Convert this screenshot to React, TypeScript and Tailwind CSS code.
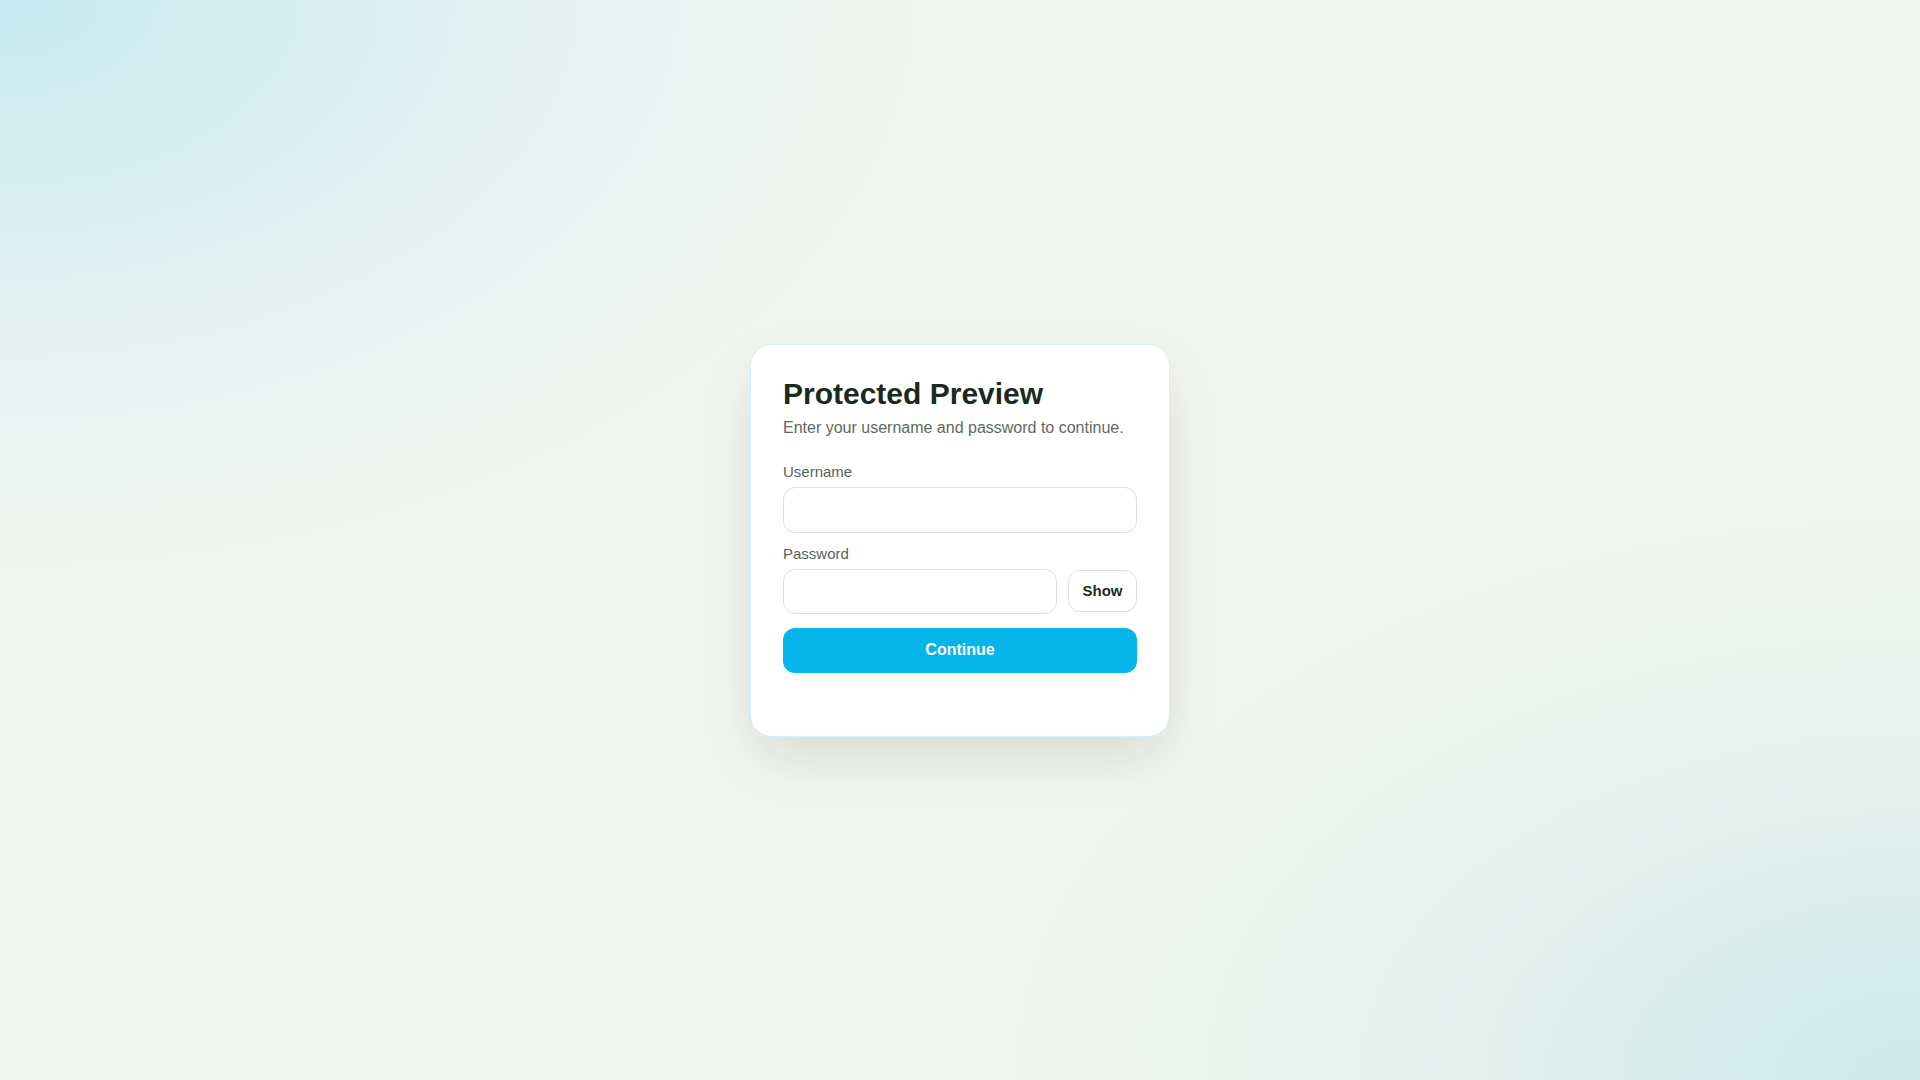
import { useState } from "react";

export default function App() {
  const [username, setUsername] = useState("");
  const [password, setPassword] = useState("");
  const [showPassword, setShowPassword] = useState(false);

  return (
    <div
      className="min-h-screen w-full flex items-center justify-center bg-[#f3f5f0] bg-[radial-gradient(ellipse_50%_55%_at_0%_0%,#c6eaf0_0%,rgba(214,238,240,0.65)_45%,rgba(243,245,240,0)_100%),radial-gradient(ellipse_50%_55%_at_100%_100%,#cde9ea_0%,rgba(218,237,235,0.65)_45%,rgba(243,245,240,0)_100%)]"
      style={{ fontFamily: '"Liberation Sans", Arial, sans-serif' }}
    >
      <form
        className="w-[420px] bg-white rounded-[22px] border border-[#d6f0f5] px-8 pt-8 pb-[63px] flex flex-col shadow-[0_24px_60px_-8px_rgba(50,70,50,0.16)]"
        onSubmit={(e) => e.preventDefault()}
      >
        <h1 className="text-[30px] leading-[1.1] font-bold text-[#1b2a1f]">Protected Preview</h1>
        <p className="mt-[6px] text-base leading-6 text-[#5d6a5f]">
          Enter your username and password to continue.
        </p>

        <label className="mt-[22px] text-[15px] leading-5 text-[#56655a]" htmlFor="username">
          Username
        </label>
        <input
          id="username"
          value={username}
          onChange={(e) => setUsername(e.target.value)}
          className="mt-[5px] h-[46px] w-full rounded-xl border border-[#dcdfdc] px-3 text-base outline-none"
        />

        <label className="mt-[11px] text-[15px] leading-5 text-[#56655a]" htmlFor="password">
          Password
        </label>
        <div className="mt-[5px] flex items-center gap-[11px]">
          <input
            id="password"
            type={showPassword ? "text" : "password"}
            value={password}
            onChange={(e) => setPassword(e.target.value)}
            className="h-[45px] flex-1 min-w-0 rounded-xl border border-[#dcdfdc] px-3 text-base outline-none"
          />
          <button
            type="button"
            onClick={() => setShowPassword((v) => !v)}
            className="w-[69px] h-[42px] rounded-xl border border-[#dcdfdc] bg-white text-[15px] font-bold text-[#1f2a22]"
          >
            {showPassword ? "Hide" : "Show"}
          </button>
        </div>

        <button
          type="submit"
          className="mt-[14px] h-[45px] w-full rounded-xl bg-[#05b5e9] text-base font-bold text-white"
        >
          Continue
        </button>
      </form>
    </div>
  );
}
